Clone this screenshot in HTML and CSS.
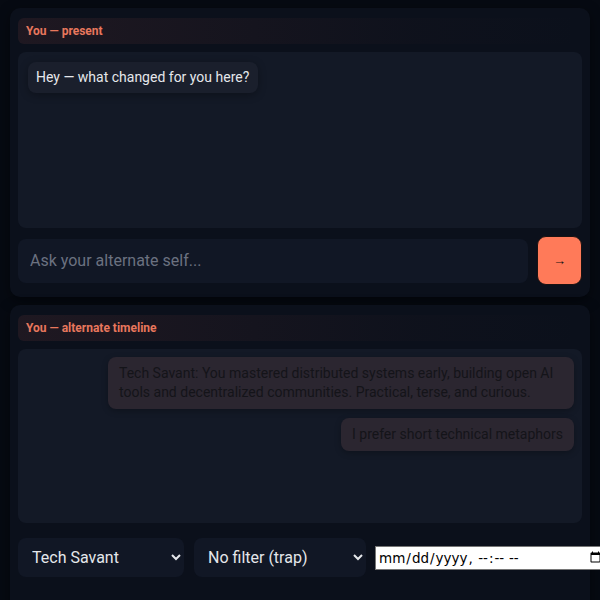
FILE: index.html
```html
<!DOCTYPE html>
<html lang="en">
<head>
<meta charset="utf-8">
<title>Alternate Self</title>
<link rel="stylesheet" href="styles.css">
</head>
<body>
<section class="panel panel-present">
  <div class="label">You — present</div>
  <div class="chat chat-present">
    <div class="bubble bubble-user">Hey — what changed for you here?</div>
  </div>
  <form class="ask">
    <input class="ask-input" type="text" placeholder="Ask your alternate self...">
    <button class="send" type="button">→</button>
  </form>
</section>
<section class="panel panel-alt">
  <div class="label">You — alternate timeline</div>
  <div class="chat chat-alt">
    <div class="bubble bubble-alt">Tech Savant: You mastered distributed systems early, building open AI tools and decentralized communities. Practical, terse, and curious.</div>
    <div class="bubble bubble-alt">I prefer short technical metaphors</div>
  </div>
  <div class="controls">
    <select class="sel sel-persona">
      <option>Tech Savant</option>
    </select>
    <select class="sel sel-filter">
      <option>No filter (trap)</option>
    </select>
    <input class="when" type="datetime-local">
  </div>
</section>
</body>
</html>
```
FILE: styles.css
```css
html, body {
  margin: 0;
  padding: 0;
  background: #060a12;
  overflow: hidden;
}
body {
  font-family: Roboto, "Liberation Sans", sans-serif;
  color: #e5e7eb;
  padding: 8px 10px 0;
}
.panel {
  background: #0b101b;
  border-radius: 10px;
  padding: 10px 8px 12px;
  box-shadow: 0 4px 14px rgba(0,0,0,0.45);
}
.panel-alt {
  margin-top: 8px;
  padding-bottom: 40px;
}
.label {
  height: 26px;
  line-height: 26px;
  padding: 0 8px;
  font-size: 12px;
  font-weight: 700;
  color: #e8775d;
  border-radius: 6px;
  background: linear-gradient(to right, rgba(120,60,60,0.18), rgba(120,60,60,0.03) 70%, rgba(0,0,0,0));
}
.chat {
  margin-top: 8px;
  background: #131926;
  border-radius: 8px;
  padding: 10px;
  display: flex;
  flex-direction: column;
  gap: 9px;
  box-sizing: border-box;
}
.chat-present { height: 176px; }
.chat-alt {
  height: 174px;
  align-items: flex-end;
  padding: 8px;
}
.bubble {
  font-size: 14px;
  line-height: 19px;
  padding: 6px 9px;
  border-radius: 8px;
}
.bubble-user {
  align-self: flex-start;
  padding: 6px 9px 6px 8px;
  background: #1a1f2c;
  color: #e5e7eb;
  box-shadow: 0 2px 8px rgba(0,0,0,0.3);
}
.bubble-alt {
  max-width: 444px;
  padding: 7px 11px 7px 11px;
  background: #2b2630;
  color: #141419;
  box-shadow: 0 2px 6px rgba(0,0,0,0.25);
}
.ask {
  margin: 8px 0 0;
  display: flex;
  align-items: center;
  gap: 9px;
}
.ask-input {
  flex: 1;
  height: 44px;
  box-sizing: border-box;
  border: none;
  border-radius: 8px;
  background: #111725;
  color: #e5e7eb;
  padding: 0 12px;
  font-family: Roboto, "Liberation Sans", sans-serif;
  font-size: 16px;
  outline: none;
}
.ask-input::placeholder { color: #6b7180; }
.send {
  width: 45px;
  height: 49px;
  border: 1px solid #1a1212;
  border-radius: 9px;
  background: #ff7a59;
  color: #111;
  font-size: 13px;
  font-weight: 700;
  padding: 0;
}
.controls {
  margin-top: 15px;
  display: flex;
  align-items: center;
  gap: 10px;
  width: 600px;
}
.sel {
  height: 39px;
  border: none;
  border-radius: 8px;
  background: #111725;
  color: #e5e7eb;
  font-family: Roboto, "Liberation Sans", sans-serif;
  font-size: 16px;
  padding: 0 10px;
  color-scheme: dark;
  outline: none;
}
.sel-persona { width: 166px; }
.sel-filter { width: 172px; }
.when {
  width: 232px;
  height: 24px;
  box-sizing: border-box;
  margin-left: -1px;
  font-size: 13.5px;
  font-family: "DejaVu Sans", sans-serif;
  background: #fff;
  color: #000;
  border: 1px solid #767676;
  padding: 0 2px;
}
```
